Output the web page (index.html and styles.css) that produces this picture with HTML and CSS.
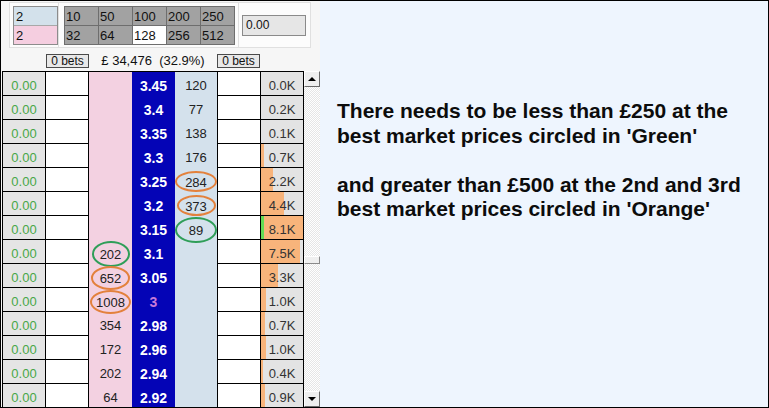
FILE: index.html
```html
<!DOCTYPE html>
<html lang="en">
<head>
    <meta charset="UTF-8">
    <meta name="viewport" content="width=device-width, initial-scale=1.0">
    <title>Ladder</title>
    <link rel="stylesheet" href="styles.css">
</head>
<body>
    <div class="frame">
        <div class="ladder-pane">
            <div class="toolbar">
                <div class="panel stake-panel">
                    <div class="stakes">
                        <div class="stake back-stake">2</div>
                        <div class="stake lay-stake">2</div>
                    </div>
                </div>
                <div class="panel amounts-panel">
                    <div class="amounts">
                        <div class="amount">10</div>
                        <div class="amount">50</div>
                        <div class="amount">100</div>
                        <div class="amount">200</div>
                        <div class="amount">250</div>
                        <div class="amount">32</div>
                        <div class="amount">64</div>
                        <div class="amount active">128</div>
                        <div class="amount">256</div>
                        <div class="amount">512</div>
                    </div>
                </div>
                <div class="panel pl-panel">
                    <div class="pl-box">0.00</div>
                </div>
            </div>

            <div class="totals">
                <div class="bets-btn">0 bets</div>
                <div class="matched">£ 34,476  (32.9%)</div>
                <div class="bets-btn">0 bets</div>
            </div>

            <div class="ladder-area">
                <div class="ladder">
                    <div class="cell pl">0.00</div><div class="cell blank"></div><div class="cell back"></div><div class="cell price">3.45</div><div class="cell lay">120</div><div class="cell blank"></div><div class="cell vol"><span class="vol-bar" style="width:0px"></span><span class="vol-label">0.0K</span></div>
                    <div class="cell pl">0.00</div><div class="cell blank"></div><div class="cell back"></div><div class="cell price">3.4</div><div class="cell lay">77</div><div class="cell blank"></div><div class="cell vol"><span class="vol-bar" style="width:0px"></span><span class="vol-label">0.2K</span></div>
                    <div class="cell pl">0.00</div><div class="cell blank"></div><div class="cell back"></div><div class="cell price">3.35</div><div class="cell lay">138</div><div class="cell blank"></div><div class="cell vol"><span class="vol-bar" style="width:0px"></span><span class="vol-label">0.1K</span></div>
                    <div class="cell pl">0.00</div><div class="cell blank"></div><div class="cell back"></div><div class="cell price">3.3</div><div class="cell lay">176</div><div class="cell blank"></div><div class="cell vol"><span class="vol-bar" style="width:3px"></span><span class="vol-label">0.7K</span></div>
                    <div class="cell pl">0.00</div><div class="cell blank"></div><div class="cell back"></div><div class="cell price">3.25</div><div class="cell lay"><span class="ring orange" style="width:42px;height:21px">284</span></div><div class="cell blank"></div><div class="cell vol"><span class="vol-bar" style="width:12px"></span><span class="vol-label">2.2K</span></div>
                    <div class="cell pl">0.00</div><div class="cell blank"></div><div class="cell back"></div><div class="cell price">3.2</div><div class="cell lay"><span class="ring orange" style="width:39px;height:21px">373</span></div><div class="cell blank"></div><div class="cell vol"><span class="vol-bar" style="width:23px"></span><span class="vol-label">4.4K</span></div>
                    <div class="cell pl">0.00</div><div class="cell blank"></div><div class="cell back"></div><div class="cell price">3.15</div><div class="cell lay"><span class="ring green" style="width:45px;height:26px">89</span></div><div class="cell blank"></div><div class="cell vol"><span class="vol-bar last-traded" style="width:42px"></span><span class="vol-label">8.1K</span></div>
                    <div class="cell pl">0.00</div><div class="cell blank"></div><div class="cell back"><span class="ring green" style="width:38px;height:26px">202</span></div><div class="cell price">3.1</div><div class="cell lay"></div><div class="cell blank"></div><div class="cell vol"><span class="vol-bar" style="width:39px"></span><span class="vol-label">7.5K</span></div>
                    <div class="cell pl">0.00</div><div class="cell blank"></div><div class="cell back"><span class="ring orange" style="width:39px;height:24px">652</span></div><div class="cell price">3.05</div><div class="cell lay"></div><div class="cell blank"></div><div class="cell vol"><span class="vol-bar" style="width:17px"></span><span class="vol-label">3.3K</span></div>
                    <div class="cell pl">0.00</div><div class="cell blank"></div><div class="cell back"><span class="ring orange" style="width:41px;height:24px">1008</span></div><div class="cell price current">3</div><div class="cell lay"></div><div class="cell blank"></div><div class="cell vol"><span class="vol-bar" style="width:5px"></span><span class="vol-label">1.0K</span></div>
                    <div class="cell pl">0.00</div><div class="cell blank"></div><div class="cell back">354</div><div class="cell price">2.98</div><div class="cell lay"></div><div class="cell blank"></div><div class="cell vol"><span class="vol-bar" style="width:4px"></span><span class="vol-label">0.7K</span></div>
                    <div class="cell pl">0.00</div><div class="cell blank"></div><div class="cell back">172</div><div class="cell price">2.96</div><div class="cell lay"></div><div class="cell blank"></div><div class="cell vol"><span class="vol-bar" style="width:5px"></span><span class="vol-label">1.0K</span></div>
                    <div class="cell pl">0.00</div><div class="cell blank"></div><div class="cell back">202</div><div class="cell price">2.94</div><div class="cell lay"></div><div class="cell blank"></div><div class="cell vol"><span class="vol-bar" style="width:2px"></span><span class="vol-label">0.4K</span></div>
                    <div class="cell pl">0.00</div><div class="cell blank"></div><div class="cell back">64</div><div class="cell price">2.92</div><div class="cell lay"></div><div class="cell blank"></div><div class="cell vol"><span class="vol-bar" style="width:4px"></span><span class="vol-label">0.9K</span></div>
                </div>
                <div class="scrollbar">
                    <div class="scroll-btn"><span class="arrow up"></span></div>
                    <div class="scroll-track"><div class="scroll-thumb"></div></div>
                    <div class="scroll-btn"><span class="arrow down"></span></div>
                </div>
            </div>
        </div>

        <div class="notes">
            <p>There needs to be less than £250 at the<br>best market prices circled in 'Green'</p>
            <p>and greater than £500 at the 2nd and 3rd<br>best market prices circled in 'Orange'</p>
        </div>
    </div>
</body>
</html>
```

FILE: styles.css
```css
body {
    margin: 0;
    background-color: #ffffff;
    font-family: 'Liberation Sans', Arial, sans-serif;
    color: #111;
}
.frame {
    width: 769px;
    height: 408px;
    border: 1px solid #000;
    box-sizing: border-box;
    display: flex;
    overflow: hidden;
}
.ladder-pane {
    width: 319px;
    background-color: #f6f6f6;
}

/* top toolbar */
.toolbar {
    display: flex;
    height: 47px;
    padding: 1px 0 0 8px;
    box-sizing: border-box;
}
.panel {
    height: 46px;
    box-sizing: border-box;
    border: 1px solid #e0e0e0;
    background-color: #fcfcfc;
    display: flex;
    align-items: center;
}
.panel + .panel {
    margin-left: -1px;
}
.stake-panel {
    width: 50px;
    padding-left: 3px;
}
.amounts-panel {
    width: 181px;
    padding-left: 5px;
}
.pl-panel {
    width: 73px;
    padding-left: 3px;
}
.stakes {
    width: 43px;
    border: 1px solid #8c8c8c;
}
.stake {
    height: 18px;
    line-height: 19px;
    padding-left: 2px;
    font-family: 'Liberation Sans Narrow', 'Liberation Sans', sans-serif;
    font-size: 13px;
}
.back-stake {
    background-color: #d3e1eb;
    border-bottom: 1px solid #a8a8a8;
}
.lay-stake {
    background-color: #f5cee0;
}
.amounts {
    display: grid;
    grid-template-columns: repeat(5, 34px);
    grid-auto-rows: 19px;
    border-left: 1px solid #6e6e6e;
    border-top: 1px solid #6e6e6e;
}
.amount {
    box-sizing: border-box;
    border-right: 1px solid #6e6e6e;
    border-bottom: 1px solid #6e6e6e;
    background-color: #a2a2a2;
    padding-left: 1px;
    line-height: 19px;
    font-family: 'Liberation Sans Narrow', 'Liberation Sans', sans-serif;
    font-size: 13px;
}
.amount.active {
    background-color: #ffffff;
}
.pl-box {
    width: 64px;
    height: 21px;
    box-sizing: border-box;
    border: 1px solid #8a8a8a;
    background-color: #e6e6e6;
    padding-left: 3px;
    line-height: 19px;
    font-size: 12px;
}

/* totals row */
.totals {
    display: flex;
    height: 23px;
    padding: 6px 0 0 45px;
    box-sizing: border-box;
}
.bets-btn {
    width: 43px;
    height: 14px;
    box-sizing: border-box;
    border: 1px solid #4a4a4a;
    background-color: #e8e8e8;
    text-align: center;
    font-size: 12px;
    line-height: 12px;
}
.matched {
    width: 128px;
    text-align: center;
    white-space: pre;
    font-family: 'Liberation Sans Narrow', 'Liberation Sans', sans-serif;
    font-size: 13px;
    line-height: 14px;
}

/* ladder */
.ladder-area {
    display: flex;
    margin-left: 1px;
}
.ladder {
    display: grid;
    grid-template-columns: repeat(7, 43px);
    grid-auto-rows: 24px;
    border-left: 1px solid #000;
    border-top: 1px solid #000;
}
.cell {
    box-sizing: border-box;
    display: flex;
    align-items: center;
    justify-content: center;
    padding-top: 3px;
    font-size: 13px;
}
.pl,
.blank,
.vol {
    border-right: 1px solid #000;
    border-bottom: 1px solid #000;
}
.pl {
    background-color: #e5e5e5;
    color: #48a848;
    font-family: 'Liberation Sans Narrow', 'Liberation Sans', sans-serif;
}
.blank {
    background-color: #ffffff;
}
.back {
    background-color: #f3d1e1;
    color: #222;
}
.price {
    background-color: #0404b6;
    color: #ffffff;
    font-weight: bold;
    font-size: 14px;
}
.price.current {
    color: #c77ad8;
}
.lay {
    background-color: #d4e1ec;
    border-right: 1px solid #000;
    color: #222;
}
.ring {
    display: inline-flex;
    align-items: center;
    justify-content: center;
    box-sizing: border-box;
    border: 2px solid;
    border-radius: 50%;
    padding-top: 1px;
    position: relative;
    z-index: 1;
}
.ring.orange {
    border-color: #e3813c;
}
.ring.green {
    border-color: #2f9e58;
}
.vol {
    display: grid;
    grid-template-columns: 1fr;
    justify-content: stretch;
    justify-items: start;
    align-items: stretch;
    padding: 0;
    background-color: #e3e3e3;
}
.vol-bar,
.vol-label {
    grid-area: 1 / 1;
}
.vol-bar {
    background-color: #f8b47b;
}
.vol-bar.last-traded {
    background: linear-gradient(to right, #63dc55 3px, #f8b47b 3px);
}
.vol-label {
    justify-self: stretch;
    align-self: center;
    padding-top: 3px;
    text-align: center;
    color: #333;
    font-family: 'Liberation Sans Narrow', 'Liberation Sans', sans-serif;
}

/* scrollbar */
.scrollbar {
    width: 16px;
    height: 336px;
    display: flex;
    flex-direction: column;
    background: repeating-conic-gradient(#ffffff 0 25%, #e6e6e6 0 50%) 0 0 / 2px 2px;
}
.scroll-btn {
    height: 16px;
    box-sizing: border-box;
    border: 1px solid;
    border-color: #ffffff #6a6a6a #6a6a6a #ffffff;
    background-color: #efefef;
    display: flex;
    align-items: center;
    justify-content: center;
}
.arrow {
    width: 0;
    height: 0;
    border-left: 4px solid transparent;
    border-right: 4px solid transparent;
}
.arrow.up {
    border-bottom: 4px solid #000;
}
.arrow.down {
    border-top: 4px solid #000;
}
.scroll-track {
    flex: 1;
}
.scroll-thumb {
    height: 8px;
    margin-top: 169px;
    box-sizing: border-box;
    border: 1px solid;
    border-color: #ffffff #8a8a8a #8a8a8a #ffffff;
    background-color: #efefef;
}

/* explanation text */
.notes {
    flex: 1;
    background-color: #eef5fe;
    padding: 98px 0 0 17px;
}
.notes p {
    margin: 0 0 24.5px;
    font-size: 21px;
    font-weight: bold;
    line-height: 24.5px;
    white-space: nowrap;
    color: #0c0c0c;
}
```
